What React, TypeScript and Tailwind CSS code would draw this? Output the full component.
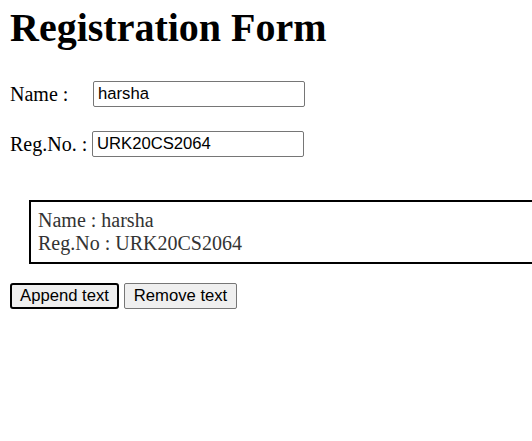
import React, { useState } from "react";

export default function App() {
  const [name, setName] = useState("harsha");
  const [reg, setReg] = useState("URK20CS2064");

  return (
    <div className="w-[532px] h-[441px] overflow-hidden bg-white text-black font-['Liberation_Serif',serif]">
      <div className="pl-[10px]">
        <h1 className="mt-[5px] text-[40px] leading-[46px] font-bold">Registration Form</h1>

        {/* form rows */}
        <div className="mt-[30px] flex items-center h-[26px]">
          <span className="w-[83px] text-[20px] leading-[23px]">Name :</span>
          <input
            value={name}
            onChange={(e) => setName(e.target.value)}
            className="w-[212px] h-[26px] px-[4px] border border-[#767676] rounded-[2px] font-['Liberation_Sans',Arial,sans-serif] text-[16.67px] text-black outline-none"
          />
        </div>
        <div className="mt-[24px] flex items-center h-[26px]">
          <span className="w-[82px] text-[20px] leading-[23px]">Reg.No. :</span>
          <input
            value={reg}
            onChange={(e) => setReg(e.target.value)}
            className="w-[212px] h-[26px] px-[4px] border border-[#767676] rounded-[2px] font-['Liberation_Sans',Arial,sans-serif] text-[16.67px] text-black outline-none"
          />
        </div>

        {/* output box */}
        <div className="mt-[43px] ml-[19px] w-[520px] h-[64px] border-2 border-black pl-[7px] pt-[7px] text-[20px] leading-[23px] text-[#333333]">
          <div>Name : {name}</div>
          <div>Reg.No : {reg}</div>
        </div>

        <div className="mt-[19px] flex gap-[5px]">
          <button className="w-[109px] h-[26px] border-2 border-black rounded-[3px] bg-[#efefef] font-['Liberation_Sans',Arial,sans-serif] text-[16.67px] leading-none text-black">
            Append text
          </button>
          <button className="w-[113px] h-[26px] border border-[#767676] rounded-[2px] bg-[#efefef] font-['Liberation_Sans',Arial,sans-serif] text-[16.67px] leading-none text-black">
            Remove text
          </button>
        </div>
      </div>
    </div>
  );
}
